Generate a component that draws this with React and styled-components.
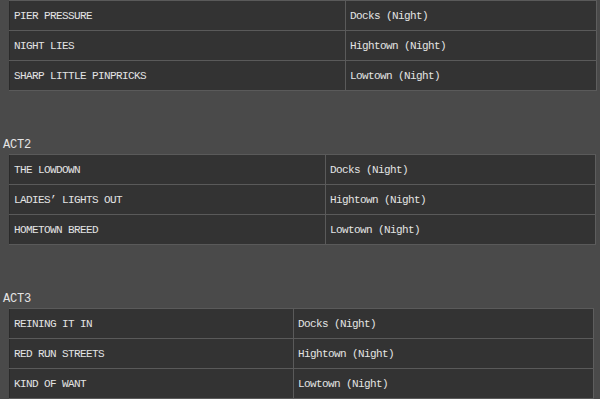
import React from "react";
import styled, { createGlobalStyle } from "styled-components";

const acts = [
  {
    title: null,
    width: 588,
    split: 331,
    rows: [
      ["PIER PRESSURE", "Docks (Night)"],
      ["NIGHT LIES", "Hightown (Night)"],
      ["SHARP LITTLE PINPRICKS", "Lowtown (Night)"],
    ],
  },
  {
    title: "ACT2",
    width: 587,
    split: 311,
    rows: [
      ["THE LOWDOWN", "Docks (Night)"],
      ["LADIES’ LIGHTS OUT", "Hightown (Night)"],
      ["HOMETOWN BREED", "Lowtown (Night)"],
    ],
  },
  {
    title: "ACT3",
    width: 585,
    split: 279,
    rows: [
      ["REINING IT IN", "Docks (Night)"],
      ["RED RUN STREETS", "Hightown (Night)"],
      ["KIND OF WANT", "Lowtown (Night)"],
    ],
  },
];

const GlobalStyle = createGlobalStyle`
  body {
    margin: 0;
    background: #4a4a4a;
    color: #e4e4e4;
    font-family: "Liberation Mono", "DejaVu Sans Mono", monospace;
    overflow: hidden;
  }
`;

const Page = styled.div`
  padding-left: 3px;
`;

const Section = styled.section`
  & + & {
    margin-top: 45px;
  }
`;

const ActTitle = styled.div`
  font-size: 12px;
  line-height: 18px;
  height: 18px;
  letter-spacing: -0.2px;
`;

const Table = styled.table`
  width: ${(p) => p.$width}px;
  margin-left: 6px;
  border-collapse: collapse;
  background: #333333;
  border-left: 1px solid #2a2a2a;
  border-top: 1px solid #5a5a5a;
  border-right: 1px solid #5e5e5e;
  border-bottom: 1px solid #5a5a5a;
  table-layout: fixed;
`;

const Cell = styled.td`
  height: 29px;
  padding: 0 0 0 4px;
  border-top: 1px solid #5a5a5a;
  border-bottom: 1px solid #5a5a5a;
  border-left: ${(p) => (p.$first ? "none" : "1px solid #5a5a5a")};
  width: ${(p) => (p.$first ? `${p.$split}px` : "auto")};
  font-size: 11px;
  letter-spacing: -0.6px;
  white-space: pre;
  vertical-align: middle;
`;

export default function App() {
  return (
    <>
      <GlobalStyle />
      <Page>
        {acts.map((act, i) => (
          <Section key={i}>
            {act.title && <ActTitle>{act.title}</ActTitle>}
            <Table $width={act.width}>
              <tbody>
                {act.rows.map(([mission, place]) => (
                  <tr key={mission}>
                    <Cell $first $split={act.split}>
                      {mission}
                    </Cell>
                    <Cell>{place}</Cell>
                  </tr>
                ))}
              </tbody>
            </Table>
          </Section>
        ))}
      </Page>
    </>
  );
}
